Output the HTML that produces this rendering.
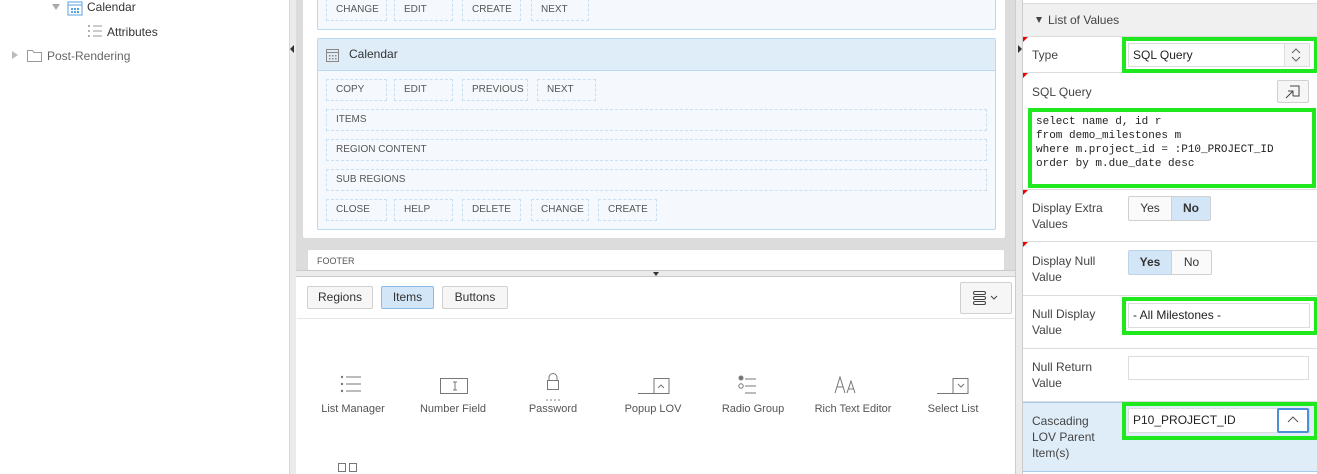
<!DOCTYPE html>
<html><head><style>
*{box-sizing:border-box;margin:0;padding:0}
body{width:1317px;height:474px;overflow:hidden;font-family:"Liberation Sans",sans-serif;font-size:12px;color:#404040;position:relative;background:#fff}
.a{position:absolute}
.dash{position:absolute;border:1px dashed #c9dff2;font-size:10px;color:#555;padding-left:9px;line-height:20px;height:22px}
.btn{position:absolute;border:1px solid #d0d0d0;background:#f6f6f6;border-radius:2px;font-size:12px;color:#333;text-align:center;line-height:21px;height:23px}
.row{position:absolute;left:1023px;width:294px;border-bottom:1px solid #dcdcdc}
.lbl{position:absolute;left:9px;font-size:12px;color:#444;line-height:16px}
.req::before{content:"";position:absolute;left:0;top:0;border-top:5px solid #e00;border-right:5px solid transparent}
.green{position:absolute;border:4px solid #1fe81f}
.inp{position:absolute;border:1px solid #dcdcdc;background:#fff;font-size:12px;color:#222;padding-left:4px}
.it{position:absolute;width:80px;text-align:center;font-size:11px;color:#555;top:403px}
</style></head><body>
<!-- left tree -->
<div class="a" style="left:52px;top:4px;border-top:6px solid #aaa;border-left:4px solid transparent;border-right:4px solid transparent"></div>
<svg class="a" style="left:67px;top:0" width="16" height="16"><rect x="1" y="2" width="14" height="13" fill="none" stroke="#5aa1e0"/><line x1="1" y1="5" x2="15" y2="5" stroke="#5aa1e0"/><g fill="#5aa1e0"><rect x="4" y="8" width="2" height="2"/><rect x="7" y="8" width="2" height="2"/><rect x="10" y="8" width="2" height="2"/><rect x="4" y="11" width="2" height="2"/><rect x="7" y="11" width="2" height="2"/><rect x="10" y="11" width="2" height="2"/></g></svg>
<div class="a" style="left:87px;top:0;font-size:12px;color:#333">Calendar</div>
<svg class="a" style="left:87px;top:24px" width="16" height="14"><g fill="#999"><circle cx="2" cy="2" r="1"/><circle cx="2" cy="7" r="1"/><circle cx="2" cy="12" r="1"/></g><g stroke="#999"><line x1="6" y1="2" x2="15" y2="2"/><line x1="6" y1="7" x2="15" y2="7"/><line x1="6" y1="12" x2="15" y2="12"/></g></svg>
<div class="a" style="left:107px;top:25px;color:#333">Attributes</div>
<div class="a" style="left:12px;top:51px;border-left:6px solid #bbb;border-top:4px solid transparent;border-bottom:4px solid transparent"></div>
<svg class="a" style="left:27px;top:49px" width="15" height="13"><path d="M0.5 1.5h5l1.5 2h7.5v9h-14z" fill="none" stroke="#999"/></svg>
<div class="a" style="left:47px;top:49px;color:#666">Post-Rendering</div>
<!-- splitter left -->
<div class="a" style="left:289px;top:0;width:7px;height:474px;background:#ebebeb;border-left:1px solid #d6d6d6"></div>
<div class="a" style="left:290px;top:45px;border-right:4px solid #333;border-top:4px solid transparent;border-bottom:4px solid transparent"></div>
<!-- middle -->
<div class="a" style="left:296px;top:0;width:720px;height:277px;background:#dcdcdc"></div>
<div class="a" style="left:303px;top:0;width:702px;height:238px;background:#fff;border-radius:0 0 2px 2px"></div>
<div class="a" style="left:317px;top:-2px;width:679px;height:32px;background:#f5f9fd;border:1px solid #b9d8f2;border-radius:2px"></div>
<div class="dash" style="left:326px;top:-1px;width:61px">CHANGE</div>
<div class="dash" style="left:394px;top:-1px;width:59px">EDIT</div>
<div class="dash" style="left:462px;top:-1px;width:59px">CREATE</div>
<div class="dash" style="left:531px;top:-1px;width:58px">NEXT</div>
<div class="a" style="left:317px;top:38px;width:679px;height:192px;background:#f5f9fd;border:1px solid #b9d8f2;border-radius:2px"></div>
<div class="a" style="left:318px;top:39px;width:677px;height:32px;background:#dfedf9;border-bottom:1px solid #b9d8f2"></div>
<svg class="a" style="left:326px;top:47px" width="14" height="16"><rect x="0.5" y="2.5" width="12" height="12" fill="none" stroke="#888"/><line x1="0.5" y1="5.5" x2="12.5" y2="5.5" stroke="#888"/><g fill="#888"><rect x="3" y="8" width="1.5" height="1.5"/><rect x="6" y="8" width="1.5" height="1.5"/><rect x="9" y="8" width="1.5" height="1.5"/><rect x="3" y="11" width="1.5" height="1.5"/><rect x="6" y="11" width="1.5" height="1.5"/><rect x="9" y="11" width="1.5" height="1.5"/></g></svg>
<div class="a" style="left:349px;top:47px;font-size:12px;color:#333">Calendar</div>
<div class="dash" style="left:326px;top:79px;width:61px">COPY</div>
<div class="dash" style="left:394px;top:79px;width:59px">EDIT</div>
<div class="dash" style="left:462px;top:79px;width:66px">PREVIOUS</div>
<div class="dash" style="left:537px;top:79px;width:59px">NEXT</div>
<div class="dash" style="left:326px;top:109px;width:661px">ITEMS</div>
<div class="dash" style="left:326px;top:139px;width:661px">REGION CONTENT</div>
<div class="dash" style="left:326px;top:169px;width:661px">SUB REGIONS</div>
<div class="dash" style="left:326px;top:199px;width:61px">CLOSE</div>
<div class="dash" style="left:394px;top:199px;width:59px">HELP</div>
<div class="dash" style="left:462px;top:199px;width:59px">DELETE</div>
<div class="dash" style="left:531px;top:199px;width:58px">CHANGE</div>
<div class="dash" style="left:598px;top:199px;width:59px">CREATE</div>
<div class="a" style="left:308px;top:250px;width:696px;height:20px;background:#fff;border-radius:2px;font-size:9px;color:#555;padding:6px 0 0 9px">FOOTER</div>
<div class="a" style="left:296px;top:270px;width:720px;height:7px;background:#ebebeb;border-top:1px solid #ccc;border-bottom:1px solid #ccc"></div>
<div class="a" style="left:653px;top:272px;border-top:4px solid #333;border-left:3px solid transparent;border-right:3px solid transparent"></div>
<!-- bottom panel -->
<div class="a" style="left:296px;top:277px;width:719px;height:197px;background:#fff"></div>
<div class="btn" style="left:307px;top:286px;width:66px">Regions</div>
<div class="btn" style="left:381px;top:286px;width:53px;background:#d3e6f7;border-color:#8db9e2">Items</div>
<div class="btn" style="left:442px;top:286px;width:66px">Buttons</div>
<div class="btn" style="left:960px;top:282px;width:52px;height:32px"></div>
<svg class="a" style="left:972px;top:290px" width="32" height="16"><g fill="none" stroke="#444"><rect x="1.5" y="1.5" width="12" height="3" rx="1.5"/><rect x="1.5" y="6.5" width="12" height="3" rx="1.5"/><rect x="1.5" y="11.5" width="12" height="3" rx="1.5"/><path d="M19 6l3 3 3-3"/></g></svg>
<div class="a" style="left:297px;top:318px;width:718px;height:1px;background:#e6e6e6"></div>
<svg class="a" style="left:297px;top:370px" width="718" height="104"><g fill="none" stroke="#777">
<path d="M49 7h15M49 14h15M49 21h15"/><rect x="143.5" y="8.5" width="27" height="15"/><path d="M156 12h4M158 12v8M156 20h4"/>
<rect x="250.5" y="10.5" width="11" height="9"/><path d="M252 10.5v-3a4 4 0 0 1 8 0v3"/>
<path d="M341 23.5h31v-15h-15v15M361 18l3-3 3 3"/><path d="M448 9h11M448 16h11M448 23h11"/>
<path d="M538 23l5-16 5 16M540 17h6M550 23l4-12 4 12M551 19h6"/>
<path d="M640 23.5h31v-15h-15v15M661 14l3 3 3-3"/>
<rect x="41.5" y="93.5" width="7" height="8"/><rect x="52.5" y="93.5" width="7" height="8"/></g>
<g fill="#777"><circle cx="45" cy="7" r="1.2"/><circle cx="45" cy="14" r="1.2"/><circle cx="45" cy="21" r="1.2"/><circle cx="250" cy="30" r=".8"/><circle cx="254" cy="30" r=".8"/><circle cx="258" cy="30" r=".8"/><circle cx="262" cy="30" r=".8"/><circle cx="444" cy="8" r="2.5"/></g><circle cx="444" cy="16" r="2.2" fill="none" stroke="#777"/></svg>
<div class="it" style="left:313px">List Manager</div>
<div class="it" style="left:413px">Number Field</div>
<div class="it" style="left:513px">Password</div>
<div class="it" style="left:613px">Popup LOV</div>
<div class="it" style="left:713px">Radio Group</div>
<div class="it" style="left:808px;width:90px">Rich Text Editor</div>
<div class="it" style="left:913px">Select List</div>
<!-- right splitter -->
<div class="a" style="left:1015px;top:0;width:8px;height:474px;background:#ebebeb;border-left:1px solid #ccc;border-right:1px solid #ccc"></div>
<div class="a" style="left:1018px;top:45px;border-left:4px solid #333;border-top:4px solid transparent;border-bottom:4px solid transparent"></div>
<!-- right panel -->
<div class="a" style="left:1023px;top:0;width:294px;height:474px;background:#fff"></div>
<div class="row" style="top:3px;height:34px;background:#f0f0f0;border-top:1px solid #dcdcdc"><div class="a" style="left:13px;top:13px;border-top:6px solid #444;border-left:3.5px solid transparent;border-right:3.5px solid transparent"></div><div class="lbl" style="left:25px;top:8px">List of Values</div></div>
<div class="row req" style="top:37px;height:36px"><div class="lbl" style="top:10px">Type</div></div>
<div class="green" style="left:1122px;top:37px;width:196px;height:36px"></div>
<div class="inp" style="left:1128px;top:43px;width:182px;height:24px;line-height:22px">SQL Query</div>
<div class="a" style="left:1284px;top:44px;width:25px;height:22px;background:#f4f4f4;border-left:1px solid #ddd"></div>
<svg class="a" style="left:1290px;top:46px" width="12" height="18"><path d="M2 7l4-4 4 4M2 11l4 4 4-4" fill="none" stroke="#666"/></svg>
<div class="row req" style="top:73px;height:117px"><div class="lbl" style="top:11px">SQL Query</div></div>
<div class="btn" style="left:1277px;top:80px;width:32px;height:23px"></div>
<svg class="a" style="left:1284px;top:84px" width="18" height="16"><path d="M6 2h9v10h-6M2 14l7-7M4 7h5v5" fill="none" stroke="#444"/></svg>
<div class="green" style="left:1028px;top:108px;width:288px;height:80px"></div>
<div class="inp" style="left:1032px;top:112px;width:280px;height:72px;font-family:'Liberation Mono',monospace;font-size:11px;line-height:14px;padding:3px 0 0 4px;border:none">select name d, id r<br>from demo_milestones m<br>where m.project_id = :P10_PROJECT_ID<br>order by m.due_date desc</div>
<div class="row req" style="top:190px;height:52px"><div class="lbl" style="top:10px">Display Extra<br>Values</div></div>
<div class="btn" style="left:1128px;top:196px;width:44px;height:25px;line-height:23px;background:#fafafa;border-radius:2px 0 0 2px">Yes</div>
<div class="btn" style="left:1171px;top:196px;width:40px;height:25px;line-height:23px;background:#d3e6f7;font-weight:bold;border-radius:0 2px 2px 0">No</div>
<div class="row req" style="top:242px;height:54px"><div class="lbl" style="top:11px">Display Null<br>Value</div></div>
<div class="btn" style="left:1128px;top:250px;width:44px;height:25px;line-height:23px;background:#d3e6f7;border-color:#bcd3ea;font-weight:bold;border-radius:2px 0 0 2px">Yes</div>
<div class="btn" style="left:1171px;top:250px;width:41px;height:25px;line-height:23px;background:#fafafa;border-radius:0 2px 2px 0">No</div>
<div class="row" style="top:296px;height:53px"><div class="lbl" style="top:10px">Null Display<br>Value</div></div>
<div class="green" style="left:1122px;top:297px;width:196px;height:38px"></div>
<div class="inp" style="left:1128px;top:303px;width:182px;height:25px;line-height:23px">- All Milestones -</div>
<div class="row" style="top:349px;height:53px"><div class="lbl" style="top:10px">Null Return<br>Value</div></div>
<div class="inp" style="left:1128px;top:356px;width:181px;height:24px"></div>
<div class="row" style="top:402px;height:70px;background:#dfedf9;border-top:1px solid #a9cbe8;border-bottom:1px solid #a9cbe8"><div class="lbl" style="top:10px">Cascading<br>LOV Parent<br>Item(s)</div></div>
<div class="green" style="left:1122px;top:402px;width:196px;height:38px"></div>
<div class="inp" style="left:1128px;top:408px;width:182px;height:25px;line-height:23px">P10_PROJECT_ID</div>
<div class="a" style="left:1277px;top:408px;width:32px;height:25px;background:#fff;border:2px solid #4a90d9;border-radius:2px"></div>
<svg class="a" style="left:1287px;top:415px" width="12" height="10"><path d="M1 7l5-5 5 5" fill="none" stroke="#555"/></svg>
</body></html>
